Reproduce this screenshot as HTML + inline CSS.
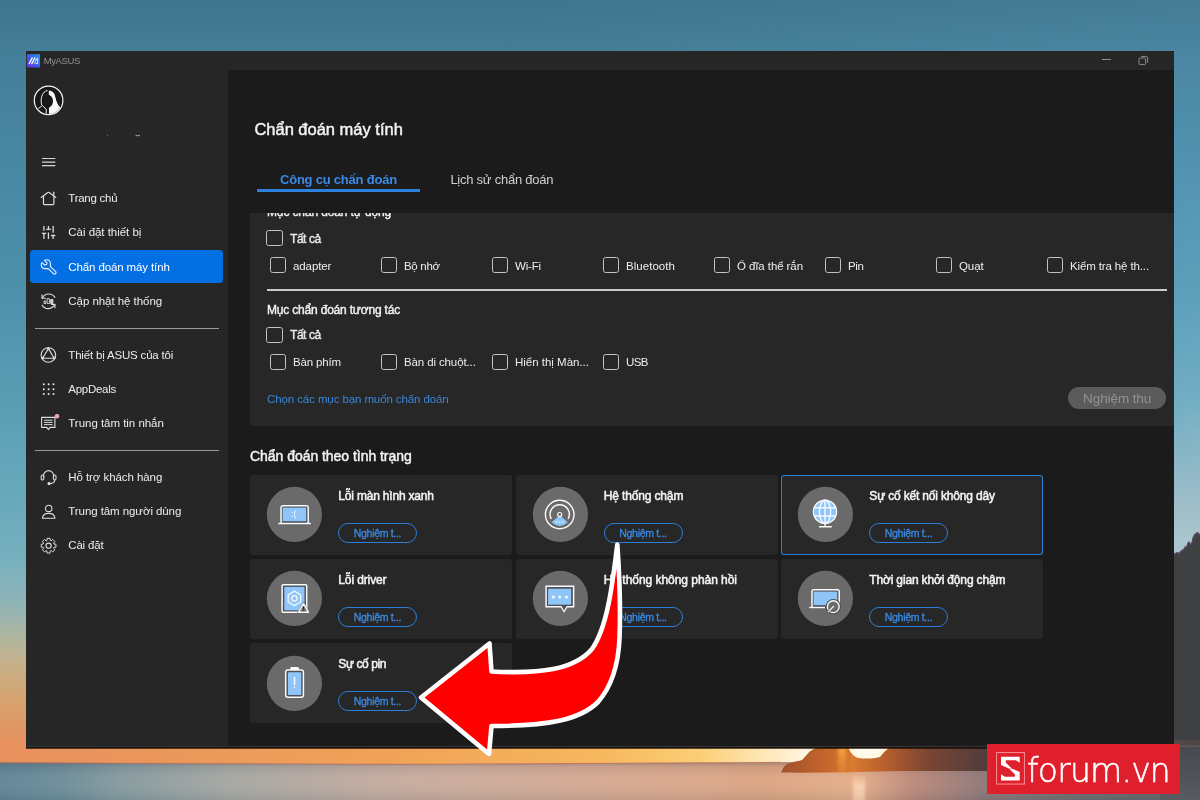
<!DOCTYPE html>
<html lang="vi">
<head>
<meta charset="utf-8">
<title>MyASUS - Chẩn đoán máy tính</title>
<style>
*{box-sizing:border-box;margin:0;padding:0}
html,body{width:1200px;height:800px;overflow:hidden;background:#4d8fa9}
body{position:relative;font-family:"Liberation Sans",sans-serif;color:#e8e8e8;font-size:12px}
.abs{position:absolute}
.t{position:absolute;white-space:nowrap;line-height:1}
/* wallpaper */
#wall{position:absolute;left:0;top:0;width:1200px;height:800px;
 background:linear-gradient(to bottom,#3f758d 0px,#457f99 60px,#4a8aa4 200px,#4e91ab 300px,#5a9db3 400px,#67a8bb 490px,#76b0be 560px,#88b3ba 590px,#8db4b8 600px,#9fb5ab 621px,#b4b59a 643px,#c6b08a 664px,#cfa878 685px,#d9a06c 706px,#e09764 728px,#e88d5d 749px,#e5855c 762px,#56707f 764px,#5d7c8a 780px,#65818c 800px)}
#wallR{position:absolute;left:500px;top:0;width:700px;height:765px;
 background:linear-gradient(to bottom,#447c96 0px,#4b87a2 60px,#5799b6 220px,#5ea0bb 300px,#72aec4 400px,#9dbdc9 498px,#a9c6cd 540px,#a9c6cd 765px);
 -webkit-mask-image:linear-gradient(to right,transparent 0,#000 100%);mask-image:linear-gradient(to right,transparent 0,#000 100%)}
/* window */
#win{will-change:transform;position:absolute;left:26px;top:51px;width:1148px;height:695px;background:#1b1b1b;overflow:hidden;box-shadow:0 1.2px 0 0 #343434,0 2.7px 0 0 #170b04}
#titlebar{position:absolute;left:0;top:0;width:1148px;height:18.5px;background:#262626}
#side{position:absolute;left:0;top:19px;width:202px;height:676px;background:#262626}
#main{position:absolute;left:202px;top:19px;width:946px;height:676px;background:#1b1b1b}
#main::before{content:"";position:absolute;left:0;top:-.5px;width:100%;height:1px;background:#1b1b1b}
.mi{position:absolute;left:42.3px;margin-top:-.5px;font-size:11.5px;letter-spacing:-.2px;color:#ececec;white-space:nowrap;line-height:14px}
.sep{position:absolute;left:9px;width:184px;height:1.2px;background:#9a9a9a}
.ico{position:absolute;left:13px;width:18px;height:18px}
.btn2{position:absolute;white-space:nowrap}
.sb{-webkit-text-stroke:.4px currentColor}
.cb{position:absolute;width:16.4px;height:16.2px;border:1.1px solid #c2c2c2;border-radius:2.6px}
.lb{position:absolute;font-size:11.5px;letter-spacing:-.1px;color:#ededed;white-space:nowrap;line-height:14px}
.card{position:absolute;width:262px;height:80px;background:#272727;border-radius:3px}
.card .ic{position:absolute;left:14px;top:9.5px}
.card .circ{position:absolute;left:17px;top:12px;width:55px;height:55px;border-radius:50%;background:#696969}
.card .ttl{position:absolute;left:88.3px;top:14px;font-size:12px;letter-spacing:-.15px;-webkit-text-stroke:.5px #f4f4f4;color:#f2f2f2;white-space:nowrap;line-height:14px}
.card .btn{position:absolute;left:88px;top:48px;width:79px;height:20px;border:1px solid #2d7fd8;border-radius:10px;color:#3a8ae6;font-size:10.5px;letter-spacing:-.2px;-webkit-text-stroke:.3px #3a8ae6;text-align:center;line-height:18px;white-space:nowrap}
</style>
</head>
<body>
<div id="wall"></div>
<div id="wallR"></div>
<svg class="abs" style="left:1160px;top:500px" width="40" height="270" viewBox="1160 500 40 270">
  <path d="M1160 556L1174 553.4L1177 552L1179.5 552.4L1181 550L1183 549.6L1184.6 546.4L1186.4 546L1187.4 542.4L1189.4 541.2L1190.6 543.6L1191.6 542L1192.4 537.6L1194 534.6L1196 532.4L1198 532L1200 534V560L1190 562L1174 566Z" fill="#5a4862"/>
  <path d="M1160 557.5L1174 555L1177 553.6L1179.5 554L1181.4 551.8L1183.2 551.4L1185 548.4L1186.8 548L1188 544.6L1189.6 543.6L1190.8 546L1192 544L1193 540L1194.6 536.8L1196.4 534.6L1198 534.2L1200 536V746H1160Z" fill="#3f4042"/>
</svg>
<svg id="shore" class="abs" style="left:0;top:740px" width="1200" height="60" viewBox="0 740 1200 60" preserveAspectRatio="none">
  <defs>
    <linearGradient id="skyh" x1="0" y1="0" x2="1200" y2="0" gradientUnits="userSpaceOnUse">
      <stop offset="0" stop-color="#e8915e"/><stop offset=".17" stop-color="#ec995b"/><stop offset=".33" stop-color="#f0a357"/>
      <stop offset=".5" stop-color="#f6b75e"/><stop offset=".585" stop-color="#fbcf76"/><stop offset=".635" stop-color="#fee6b6"/>
      <stop offset=".67" stop-color="#fff4de"/><stop offset=".74" stop-color="#fff7e6"/><stop offset=".8" stop-color="#b9704a"/><stop offset="1" stop-color="#4a4546"/>
    </linearGradient>
    <linearGradient id="seah" x1="0" y1="0" x2="1200" y2="0" gradientUnits="userSpaceOnUse">
      <stop offset="0" stop-color="#5f8394"/><stop offset=".05" stop-color="#6b8b98"/><stop offset=".1" stop-color="#84999e"/><stop offset=".19" stop-color="#a5a6a1"/><stop offset=".33" stop-color="#c6aa9d"/>
      <stop offset=".5" stop-color="#d6a890"/><stop offset=".64" stop-color="#dda381"/><stop offset=".715" stop-color="#e6ad88"/>
      <stop offset=".76" stop-color="#bd8878"/><stop offset=".82" stop-color="#8e7677"/><stop offset=".9" stop-color="#6c6a6e"/><stop offset="1" stop-color="#5c6166"/>
    </linearGradient>
    <linearGradient id="seav" x1="0" y1="762" x2="0" y2="800" gradientUnits="userSpaceOnUse">
      <stop offset="0" stop-color="#3a4a58" stop-opacity=".35"/><stop offset=".12" stop-color="#3a4a58" stop-opacity=".1"/><stop offset=".5" stop-color="#ffffff" stop-opacity=".04"/><stop offset="1" stop-color="#2f5060" stop-opacity=".12"/>
    </linearGradient>
    <linearGradient id="sear" x1="0" y1="746" x2="0" y2="800" gradientUnits="userSpaceOnUse"><stop offset="0" stop-color="#46494d"/><stop offset=".5" stop-color="#4e5155"/><stop offset="1" stop-color="#585b5f"/></linearGradient>
    <linearGradient id="isl" x1="782" y1="0" x2="990" y2="0" gradientUnits="userSpaceOnUse">
      <stop offset="0" stop-color="#a2522c"/><stop offset=".2" stop-color="#c2642c"/><stop offset=".34" stop-color="#d97a30"/><stop offset=".5" stop-color="#b65e2e"/><stop offset=".7" stop-color="#7a4632"/><stop offset="1" stop-color="#4d3d3c"/>
    </linearGradient>
    <filter id="bl" x="-1" y="-.2" width="3" height="1.4"><feGaussianBlur stdDeviation="1.6 0.8"/></filter>
    <radialGradient id="sun" cx="868" cy="748" r="26" gradientUnits="userSpaceOnUse"><stop offset="0" stop-color="#fffdf4"/><stop offset=".7" stop-color="#fff6dc"/><stop offset="1" stop-color="#ffe9b4"/></radialGradient>
    <linearGradient id="ray" x1="0" y1="748" x2="0" y2="775" gradientUnits="userSpaceOnUse"><stop offset="0" stop-color="#ffb44a" stop-opacity=".9"/><stop offset="1" stop-color="#ff9a3a" stop-opacity=".25"/></linearGradient>
    <linearGradient id="refl" x1="0" y1="772" x2="0" y2="800" gradientUnits="userSpaceOnUse"><stop offset="0" stop-color="#ffd9b0" stop-opacity="0"/><stop offset=".5" stop-color="#ffe6c8" stop-opacity=".8"/><stop offset="1" stop-color="#ffe6c8" stop-opacity=".55"/></linearGradient>
  </defs>
  <rect x="0" y="740" width="1200" height="24" fill="url(#skyh)"/>
  <path d="M0 762.6L400 764.2L800 762L1200 762V800H0Z" fill="url(#seah)"/>
  <path d="M0 762.6L400 764.2L800 762L1200 762V800H0Z" fill="url(#seav)"/>
  <path d="M0 762.2L400 763.8L780 761.8V763L400 765L0 763.6Z" fill="#c86a52" opacity=".55"/>
  <ellipse cx="868" cy="747" rx="20" ry="11.5" fill="url(#sun)"/>
  <path d="M781 772.6C783 768 785 764 790 763C795 761.6 799 761 802 760C806 756 809 751 813 749.4L818 747H848C850 752 853 756 858 758C868 759 876 758.4 880 757C883 753 886 750 889 748L895 747H1000V771H900C860 772 820 773 781 772.6Z" fill="url(#isl)"/>
  <rect x="838" y="747" width="8" height="27" fill="url(#ray)" filter="url(#bl)" opacity=".8"/>
  <rect x="853" y="776" width="12" height="26" fill="url(#refl)" filter="url(#bl)" opacity=".8"/>
  <path d="M1160 745.6H1200V800H1160Z" fill="url(#sear)"/>
  <path d="M1160 745.6H1200V746.8H1160Z" fill="#5c5e60"/>
</svg>

<div id="win">
  <div id="titlebar">
    <svg class="abs" style="left:0;top:2.5px" width="15" height="14" viewBox="0 0 15 14">
      <defs><linearGradient id="lg" x1="0" y1="1" x2="1" y2="0"><stop offset="0" stop-color="#6a2be6"/><stop offset=".5" stop-color="#3b5fee"/><stop offset="1" stop-color="#1f98f2"/></linearGradient></defs>
      <rect x=".8" y=".2" width="13.2" height="13.3" fill="url(#lg)"/>
      <path d="M3.2 9.6L6.2 3.9M5.8 9.6L8.8 3.9" stroke="#fff" stroke-width="1.25" stroke-linecap="round"/>
      <path d="M8.3 9.6L10.9 4.3H11.7V9.6H9.6" fill="none" stroke="#fff" stroke-width=".9" stroke-linejoin="round"/>
    </svg>
    <div class="abs" style="left:1076px;top:8px;width:9px;height:1px;background:#8e8e8e"></div>
    <svg class="abs" style="left:1112px;top:3.5px" width="11" height="11" viewBox="0 0 11 11" fill="none" stroke="#8e8e8e" stroke-width="1"><rect x="1" y="3" width="6.6" height="6.6" rx="1.2"/><path d="M3.2 1.4H8.2Q9.6 1.4 9.6 2.8V7.6"/></svg>
    <div class="t" style="left:17.7px;top:5px;font-size:9.5px;color:#929292;letter-spacing:-0.37px">MyASUS</div>
  </div>

  <div id="side">
    <div class="abs" style="left:4.4px;top:179.6px;width:193.1px;height:33.8px;background:#046fe2;border-radius:3.5px"></div>
    <svg class="abs" style="left:6px;top:14px" width="34" height="34" viewBox="0 0 34 34">
      <circle cx="16.6" cy="16.4" r="14.3" fill="#181818" stroke="#f4f4f4" stroke-width="1.2"/>
      <clipPath id="avc"><circle cx="16.6" cy="16.4" r="13.7"/></clipPath>
      <g clip-path="url(#avc)">
        <path d="M16.1 6.4C19 6.2 21.2 7.4 22.4 10C23.6 12.8 23.8 16 25 18.6C26 20.8 27.2 22.8 29.4 24.6L27 31H16.8V6.4Z" fill="#f8f8f8"/>
        <ellipse cx="15" cy="17.2" rx="6" ry="6.8" fill="#181818"/>
        <path d="M16.1 10.4L20 13.4L16.1 15Z" fill="#181818"/>
        <rect x="14.2" y="22" width="2.6" height="9" fill="#181818"/>
        <path d="M15.6 6.5C12.4 7 10.6 9.4 9.8 12.4C9 15.4 8.8 18.6 9.8 21.2" fill="none" stroke="#efefef" stroke-width="1"/>
        <path d="M6.4 24.4L10.4 21.6L14.2 25.2V31" fill="none" stroke="#efefef" stroke-width="1"/>
      </g>
    </svg>
    <svg class="abs" style="left:76px;top:60px" width="44" height="10" viewBox="0 0 44 10"><circle cx="5.5" cy="5.2" r=".5" fill="#9a9a9a"/><path d="M33.8 5.4Q35.6 6.8 37.6 5.2" fill="none" stroke="#d0d0d0" stroke-width=".8" stroke-linecap="round"/></svg>
    <svg class="abs" style="left:15px;top:86px" width="16" height="12" viewBox="0 0 16 12"><path d="M1 2.5H14.3M1 6.1H14.3M1 9.6H14.3" stroke="#d6d6d6" stroke-width="1.15"/></svg>
    <svg class="abs" style="left:13px;top:119px" width="18" height="18" viewBox="0 0 18 18" fill="none" stroke="#dcdcdc" stroke-width="1.1" stroke-linecap="round" stroke-linejoin="round"><path d="M2.2 8.4L8.8 3.5Q9.5 3 10.2 3.5L16.8 8.4" stroke-width="1.2"/><path d="M4.5 7.2V14.8Q4.5 15.6 5.3 15.6H14.1Q14.9 15.6 14.9 14.8V7.2" stroke-width="1.2"/><path d="M14.8 6.3V3.2" stroke-width="1.2"/></svg>
    <svg class="abs" style="left:13px;top:154px" width="18" height="18" viewBox="0 0 18 18" fill="none" stroke="#dcdcdc" stroke-width="1.1" stroke-linecap="round" stroke-linejoin="round"><path d="M4.9 1.9V6.8M2.9 9.3H7.2M4.9 9.3V15M9.45 2.1V5.4M7.3 5.4H11.8M9.45 8.5V15M14.1 1.9V8.7M12 11.5H16.3M14.1 11.5V15" stroke-width="1.3" stroke-linecap="butt"/></svg>
    <svg class="abs" style="left:13px;top:187px" width="18" height="18" viewBox="0 0 18 18" fill="none" stroke="#dcdcdc" stroke-width="1.1" stroke-linecap="round" stroke-linejoin="round"><path d="M5.3 3.4Q7.6 2.3 9.6 3.1Q11.4 4.2 11.4 6.4V9.7L16.5 14.4A1.5 1.5 0 0 1 14.4 16.6L9.2 11.6H5.6Q2.3 11.4 2.3 8Q2.2 6.5 3.1 5.6L5.6 8.1L7.8 7.2L8.1 5.9Z" stroke="#eaf3ff"/></svg>
    <svg class="abs" style="left:13px;top:222px" width="18" height="18" viewBox="0 0 18 18" fill="none" stroke="#dcdcdc" stroke-width="1.1" stroke-linecap="round" stroke-linejoin="round"><path d="M3.4 6A7 7 0 0 1 15.8 5.4M15.6 12.6A7 7 0 0 1 3.2 13.2"/><path d="M3 2.8V6.2H6.4M16 15.8V12.4H12.6"/><rect x="5.4" y="9" width="1.4" height="2.5" stroke-width=".9"/><rect x="8.5" y="6.7" width="1.9" height="4.8" stroke-width=".9"/><rect x="12" y="7.5" width="1.9" height="4" stroke-width=".9" fill="#cfcfcf"/></svg>
    <svg class="abs" style="left:13px;top:276px" width="18" height="18" viewBox="0 0 18 18" fill="none" stroke="#dcdcdc" stroke-width="1.1" stroke-linecap="round" stroke-linejoin="round"><circle cx="9.4" cy="9" r="7.3"/><path d="M9.4 2.6L15.2 12.2H3.6Z"/><circle cx="9.4" cy="2.6" r=".8"/><circle cx="15.2" cy="12.2" r=".8"/><circle cx="3.6" cy="12.2" r=".8"/></svg>
    <svg class="abs" style="left:13px;top:310px" width="18" height="18" viewBox="0 0 18 18"><circle cx="4.80" cy="4.35" r="1" fill="#e6e6e6" stroke="none"/><circle cx="9.65" cy="4.35" r="1" fill="#e6e6e6" stroke="none"/><circle cx="14.50" cy="4.35" r="1" fill="#e6e6e6" stroke="none"/><circle cx="4.80" cy="9.20" r="1" fill="#e6e6e6" stroke="none"/><circle cx="9.65" cy="9.20" r="1" fill="#e6e6e6" stroke="none"/><circle cx="14.50" cy="9.20" r="1" fill="#e6e6e6" stroke="none"/><circle cx="4.80" cy="14.05" r="1" fill="#e6e6e6" stroke="none"/><circle cx="9.65" cy="14.05" r="1" fill="#e6e6e6" stroke="none"/><circle cx="14.50" cy="14.05" r="1" fill="#e6e6e6" stroke="none"/></svg>
    <svg class="abs" style="left:13px;top:344px" width="22" height="18" viewBox="0 0 22 18" fill="none" stroke="#dcdcdc" stroke-width="1.1" stroke-linecap="round" stroke-linejoin="round"><path d="M2.6 3.4H15.9V13.4H11L9.4 15.6L7.8 13.4H2.6Z"/><path d="M5.4 6.2H13.2M5.4 8.4H13.2M5.4 10.6H13.2" stroke-width="1"/><circle cx="18" cy="2.2" r="2.3" fill="#f3a3ad" stroke="none"/></svg>
    <svg class="abs" style="left:13px;top:398px" width="18" height="18" viewBox="0 0 18 18" fill="none" stroke="#dcdcdc" stroke-width="1.1" stroke-linecap="round" stroke-linejoin="round"><path d="M4.6 9V7.6A5 5 0 0 1 14.6 7.600V9"/><rect x="2.2" y="7" width="2.6" height="5" rx="1.2"/><rect x="14.4" y="7" width="2.6" height="5" rx="1.2"/><path d="M15.6 12V12.6Q15.6 15.4 11 15.6"/><circle cx="10" cy="15.6" r="1" fill="#dcdcdc"/></svg>
    <svg class="abs" style="left:13px;top:433px" width="18" height="18" viewBox="0 0 18 18" fill="none" stroke="#dcdcdc" stroke-width="1.1" stroke-linecap="round" stroke-linejoin="round"><circle cx="9.7" cy="5.4" r="3.2"/><path d="M3.4 15.2Q4 10.4 9.7 10.4Q15.4 10.4 16 15.2Z"/></svg>
    <svg class="abs" style="left:13px;top:467px" width="18" height="18" viewBox="0 0 18 18" fill="none" stroke="#dcdcdc" stroke-width="1.1" stroke-linecap="round" stroke-linejoin="round"><path d="M7.95 3.35L8.11 1.35L11.09 1.35L11.25 3.35L12.21 3.75L13.74 2.45L15.85 4.56L14.55 6.09L14.95 7.05L16.95 7.21L16.95 10.19L14.95 10.35L14.55 11.31L15.85 12.84L13.74 14.95L12.21 13.65L11.25 14.05L11.09 16.05L8.11 16.05L7.95 14.05L6.99 13.65L5.46 14.95L3.35 12.84L4.65 11.31L4.25 10.35L2.25 10.19L2.25 7.21L4.25 7.05L4.65 6.09L3.35 4.56L5.46 2.45L6.99 3.75Z" stroke-width="1"/><circle cx="9.6" cy="8.7" r="2.6"/></svg>
    <div class="mi" style="top:121px;letter-spacing:-0.26px">Trang chủ</div>
    <div class="mi" style="top:155px;letter-spacing:-0.03px">Cài đặt thiết bị</div>
    <div class="mi" style="top:190px;color:#fff;letter-spacing:-0.12px">Chẩn đoán máy tính</div>
    <div class="mi" style="top:224px;letter-spacing:-0.05px">Cập nhật hệ thống</div>
    <div class="sep" style="top:258px"></div>
    <div class="mi" style="top:278px;letter-spacing:-0.18px">Thiết bị ASUS của tôi</div>
    <div class="mi" style="top:312px;letter-spacing:-0.27px">AppDeals</div>
    <div class="mi" style="top:346px;letter-spacing:-0.03px">Trung tâm tin nhắn</div>
    <div class="sep" style="top:380px"></div>
    <div class="mi" style="top:400px;letter-spacing:-0.07px">Hỗ trợ khách hàng</div>
    <div class="mi" style="top:434px;letter-spacing:-0.08px">Trung tâm người dùng</div>
    <div class="mi" style="top:468px;letter-spacing:-0.19px">Cài đặt</div>
  </div>

  <div id="main">
    <div class="t" style="left:26.4px;top:51.3px;font-size:16.5px;color:#f4f4f4;-webkit-text-stroke:.45px #f4f4f4;letter-spacing:-0.01px">Chẩn đoán máy tính</div>
    <div class="t" style="left:52px;top:102.5px;font-size:13px;font-weight:bold;color:#3a8ae6;letter-spacing:-0.22px">Công cụ chẩn đoán</div>
    <div class="abs" style="left:28.8px;top:119.4px;width:163px;height:2.2px;background:#2d80dc"></div>
    <div class="t" style="left:222.4px;top:102.5px;font-size:13px;color:#cfcfcf;letter-spacing:-0.25px">Lịch sử chẩn đoán</div>

    <div id="panel" class="abs" style="left:22px;top:143px;width:924px;height:213px;background:#272727;border-radius:0 0 0 4px;overflow:hidden">
      <div class="lb" style="left:17px;top:-8px;font-size:12px;color:#f2f2f2;-webkit-text-stroke:.4px #f2f2f2;letter-spacing:-0.13px">Mục chẩn đoán tự động</div>
      <div class="cb" style="left:16.3px;top:17.3px"></div><div class="lb" style="left:40px;top:19px;font-size:12px;-webkit-text-stroke:.4px #e6e6e6;letter-spacing:-0.44px">Tất cả</div>
      <div class="cb" style="left:20px;top:44.3px"></div><div class="lb" style="left:43px;top:46px;letter-spacing:-0.1px">adapter</div>
      <div class="cb" style="left:131px;top:44.3px"></div><div class="lb" style="left:154px;top:46px;letter-spacing:-0.32px">Bộ nhớ</div>
      <div class="cb" style="left:242px;top:44.3px"></div><div class="lb" style="left:265px;top:46px;letter-spacing:-0.16px">Wi-Fi</div>
      <div class="cb" style="left:353px;top:44.3px"></div><div class="lb" style="left:376px;top:46px;letter-spacing:0.04px">Bluetooth</div>
      <div class="cb" style="left:464px;top:44.3px"></div><div class="lb" style="left:487px;top:46px;letter-spacing:-0.09px">Ổ đĩa thể rắn</div>
      <div class="cb" style="left:575px;top:44.3px"></div><div class="lb" style="left:598px;top:46px;letter-spacing:-0.37px">Pin</div>
      <div class="cb" style="left:686px;top:44.3px"></div><div class="lb" style="left:709px;top:46px;letter-spacing:-0.08px">Quạt</div>
      <div class="cb" style="left:797px;top:44.3px"></div><div class="lb" style="left:820px;top:46px;letter-spacing:-0.13px">Kiểm tra hệ th...</div>
      <div class="abs" style="left:16.6px;top:75.5px;width:900px;height:2.2px;background:#c8ccd0"></div>
      <div class="lb" style="left:17px;top:90px;font-size:12px;color:#f2f2f2;-webkit-text-stroke:.4px #f2f2f2;letter-spacing:-0.19px">Mục chẩn đoán tương tác</div>
      <div class="cb" style="left:16.3px;top:113.8px"></div><div class="lb" style="left:40px;top:115px;font-size:12px;-webkit-text-stroke:.4px #e6e6e6;letter-spacing:-0.44px">Tất cả</div>
      <div class="cb" style="left:20px;top:141px"></div><div class="lb" style="left:43px;top:142px;letter-spacing:-0.15px">Bàn phím</div>
      <div class="cb" style="left:131px;top:141px"></div><div class="lb" style="left:154px;top:142px;letter-spacing:-0.12px">Bàn di chuột...</div>
      <div class="cb" style="left:242px;top:141px"></div><div class="lb" style="left:265px;top:142px;letter-spacing:-0.01px">Hiển thị Màn...</div>
      <div class="cb" style="left:353px;top:141px"></div><div class="lb" style="left:376px;top:142px;letter-spacing:-0.6px">USB</div>
      <div class="lb" style="left:17px;top:179px;color:#3a86d8;letter-spacing:-0.1px">Chọn các mục bạn muốn chẩn đoán</div>
      <div class="btn2" style="left:818.3px;top:173.7px;width:97.7px;height:22.6px;border-radius:12px;background:#5b5b5b;color:#929292;font-size:13.5px;line-height:23px;text-align:center;letter-spacing:-0.1px">Nghiệm thu</div>
    </div>

    <div class="t" style="left:22px;top:379px;font-size:14px;color:#f4f4f4;-webkit-text-stroke:.45px #f4f4f4;letter-spacing:-0.04px">Chẩn đoán theo tình trạng</div>
    <div class="card" id="card0" style="left:22.0px;top:404.5px"><svg class="ic" viewBox="0 0 60 60" width="60" height="60"><circle cx="30.4" cy="30.4" r="27.6" fill="#6a6a6a"/>
<rect x="17" y="21.8" width="27.2" height="18" rx="2" fill="#4a4f55" stroke="#fbfbfb" stroke-width="1.5"/>
<rect x="18.6" y="23.6" width="23.6" height="13.6" fill="#90c5fa"/>
<rect x="15.5" y="38.9" width="30.5" height="2.6" fill="#6a6a6a"/>
<path d="M14.3 39.5H46.9" stroke="#fbfbfb" stroke-width="1.4"/>
<text x="29.8" y="33.4" font-family="Liberation Sans, sans-serif" font-size="9.5" fill="#eef6ff" text-anchor="middle">:(</text></svg><div class="ttl" style="letter-spacing:-0.19px">Lỗi màn hình xanh</div><div class="btn" style="letter-spacing:-0.31px">Nghiệm t...</div></div>
    <div class="card" id="card1" style="left:287.5px;top:404.5px"><svg class="ic" viewBox="0 0 60 60" width="60" height="60"><circle cx="30.4" cy="30.4" r="27.6" fill="#6a6a6a"/>
<circle cx="29.7" cy="30.5" r="14.3" fill="none" stroke="#fbfbfb" stroke-width="1.4"/>
<path d="M21.3 35A9.6 9.6 0 1 1 38.1 35" fill="none" stroke="#fbfbfb" stroke-width="1.4"/>
<path d="M29.7 31.2L21.6 38.2Q29.7 45.6 37.8 38.2Z" fill="#90c5fa"/>
<circle cx="29.7" cy="30.5" r="2" fill="#6a6a6a" stroke="#fbfbfb" stroke-width="1.2"/>
<circle cx="26.6" cy="38" r=".8" fill="#f4faff"/><circle cx="29.7" cy="38" r=".8" fill="#f4faff"/><circle cx="32.8" cy="38" r=".8" fill="#f4faff"/></svg><div class="ttl" style="letter-spacing:-0.15px">Hệ thống chậm</div><div class="btn" style="letter-spacing:-0.31px">Nghiệm t...</div></div>
    <div class="card" id="card2" style="left:553.0px;top:404.5px;box-shadow:inset 0 0 0 1px #2d7fd8"><svg class="ic" viewBox="0 0 60 60" width="60" height="60"><circle cx="30.4" cy="30.4" r="27.6" fill="#6a6a6a"/>
<circle cx="30" cy="27.8" r="11.6" fill="#90c5fa" stroke="#fbfbfb" stroke-width="1.4"/>
<path d="M30 16.2V39.4M19.2 23.7H40.8M19.2 32H40.8" stroke="#f2f8ff" stroke-width="1.5" fill="none"/>
<ellipse cx="30" cy="27.8" rx="5.6" ry="11.6" fill="none" stroke="#f2f8ff" stroke-width="1.5"/>
<path d="M30 39.4V42.6M24 42.8H36.8" stroke="#fbfbfb" stroke-width="1.5" fill="none"/></svg><div class="ttl" style="letter-spacing:-0.17px">Sự cố kết nối không dây</div><div class="btn" style="letter-spacing:-0.31px">Nghiệm t...</div></div>
    <div class="card" id="card3" style="left:22.0px;top:488.75px"><svg class="ic" viewBox="0 0 60 60" width="60" height="60"><circle cx="30.4" cy="30.4" r="27.6" fill="#6a6a6a"/>
<rect x="18.1" y="16.8" width="24.6" height="27.5" rx="1" fill="#4a4f55" stroke="#fbfbfb" stroke-width="1.5"/>
<rect x="20.3" y="18.9" width="20.2" height="23.4" fill="#90c5fa"/>
<path d="M30.4 23.2L36.6 26.8V34L30.4 37.6L24.2 34V26.8Z" fill="none" stroke="#eef6ff" stroke-width="1.4" stroke-linejoin="round"/>
<circle cx="30.4" cy="30.4" r="2.6" fill="none" stroke="#eef6ff" stroke-width="1.4"/>
<path d="M39.5 33.6L46.2 45.4H32.8Z" fill="#6a6a6a"/>
<path d="M39.5 35.6L44.5 44.3H34.5Z" fill="#6a6a6a" stroke="#fbfbfb" stroke-width="1.4" stroke-linejoin="round"/>
<path d="M39.5 38.6V41.6M39.5 42.5V43.3" stroke="#2b2b2b" stroke-width="1"/></svg><div class="ttl" style="letter-spacing:-0.12px">Lỗi driver</div><div class="btn" style="letter-spacing:-0.31px">Nghiệm t...</div></div>
    <div class="card" id="card4" style="left:287.5px;top:488.75px"><svg class="ic" viewBox="0 0 60 60" width="60" height="60"><circle cx="30.4" cy="30.4" r="27.6" fill="#6a6a6a"/>
<path d="M16.1 18.3H43.6V38.7H37L34.1 43.4L31.2 38.7H16.1Z" fill="#4a4f55" stroke="#fbfbfb" stroke-width="1.5" stroke-linejoin="miter"/>
<rect x="18.1" y="20.7" width="23.1" height="16" fill="#90c5fa"/>
<path d="M31.6 38.3L34.1 42.2L36.6 38.3Z" fill="#555a60"/>
<circle cx="23.3" cy="28.9" r="1.5" fill="#f4faff"/><circle cx="29.7" cy="28.9" r="1.5" fill="#f4faff"/><circle cx="36.4" cy="28.9" r="1.5" fill="#f4faff"/></svg><div class="ttl" style="letter-spacing:-0.04px">Hệ thống không phản hồi</div><div class="btn" style="letter-spacing:-0.31px">Nghiệm t...</div></div>
    <div class="card" id="card5" style="left:553.0px;top:488.75px"><svg class="ic" viewBox="0 0 60 60" width="60" height="60"><circle cx="30.4" cy="30.4" r="27.6" fill="#6a6a6a"/>
<rect x="17" y="21.8" width="27.2" height="18" rx="2" fill="#4a4f55" stroke="#fbfbfb" stroke-width="1.5"/>
<rect x="18.6" y="23.6" width="23.6" height="13.6" fill="#90c5fa"/>
<rect x="15.5" y="38.9" width="30.5" height="2.6" fill="#6a6a6a"/>
<path d="M14.3 39.5H30" stroke="#fbfbfb" stroke-width="1.4"/>
<circle cx="38.3" cy="38.7" r="7.6" fill="#4a4f55"/>
<circle cx="38.3" cy="38.7" r="5.9" fill="#6a6a6a" stroke="#fbfbfb" stroke-width="1.4"/>
<path d="M38.3 38.7L33.6 43.4" stroke="#6a6a6a" stroke-width="3.4"/>
<path d="M38.6 38.4L33.4 43.6" stroke="#fbfbfb" stroke-width="1.3" stroke-linecap="round"/></svg><div class="ttl" style="letter-spacing:-0.16px">Thời gian khởi động chậm</div><div class="btn" style="letter-spacing:-0.31px">Nghiệm t...</div></div>
    <div class="card" id="card6" style="left:22.0px;top:573.0px"><svg class="ic" viewBox="0 0 60 60" width="60" height="60"><circle cx="30.4" cy="30.4" r="27.6" fill="#6a6a6a"/>
<rect x="26.3" y="14" width="8.6" height="3" rx="1" fill="#fbfbfb"/>
<rect x="21.7" y="16.9" width="17.7" height="27.4" rx="2.2" fill="#4a4f55" stroke="#fbfbfb" stroke-width="1.5"/>
<rect x="23.9" y="19.2" width="13.4" height="22.8" rx=".6" fill="#90c5fa"/>
<path d="M30.5 24V32.2M30.5 33.8V35.2" stroke="#f4faff" stroke-width="1.5"/></svg><div class="ttl" style="letter-spacing:-0.4px">Sự cố pin</div><div class="btn" style="letter-spacing:-0.31px">Nghiệm t...</div></div>
    
  </div>
</div>

<!-- red arrow annotation -->
<svg class="abs" style="left:0;top:0" width="1200" height="800" viewBox="0 0 1200 800">
  <path id="arrow" d="M617.3 544.5C619.5 575 620.5 612 619.5 638C618.5 664 612 686 598 702C580 720 548 726 491.5 726L489 754L421 697.5L489.5 643.5L491.5 671.5C540 674 574 670 592 649C607.5 627 612.5 584 617.3 544.5Z" fill="#fe0000" stroke="#ffffff" stroke-width="4.6" stroke-linejoin="round"/>
</svg>

<!-- watermark -->
<div id="sforum" class="abs" style="will-change:transform;left:987px;top:743.6px;width:193px;height:50.2px;background:#e01f2d">
  <svg class="abs" style="left:8px;top:7.4px" width="32" height="36" viewBox="0 0 32 36">
    <rect x="1.55" y="1.55" width="27.9" height="31.5" fill="none" stroke="#f6858c" stroke-width="1.1"/>
    <path d="M6 5.7H24.7V11.8L20.9 9.3H10.7V11.5L16.2 17L14.5 17.8L6 14Z" fill="#fff"/>
    <path d="M24.7 29.4H6V23.3L9.8 25.8H20V23.6L14.5 18.1L16.2 17.3L24.7 21.1Z" fill="#fff"/>
  </svg>
  <div class="t" id="forumtxt" style="left:40px;top:9.8px;font-size:33px;letter-spacing:-.8px;color:#fff;-webkit-text-stroke:.55px #fff;font-family:'DejaVu Sans Light','DejaVu Sans','Liberation Sans',sans-serif;font-weight:200">forum.vn</div>
</div>
</body>
</html>
